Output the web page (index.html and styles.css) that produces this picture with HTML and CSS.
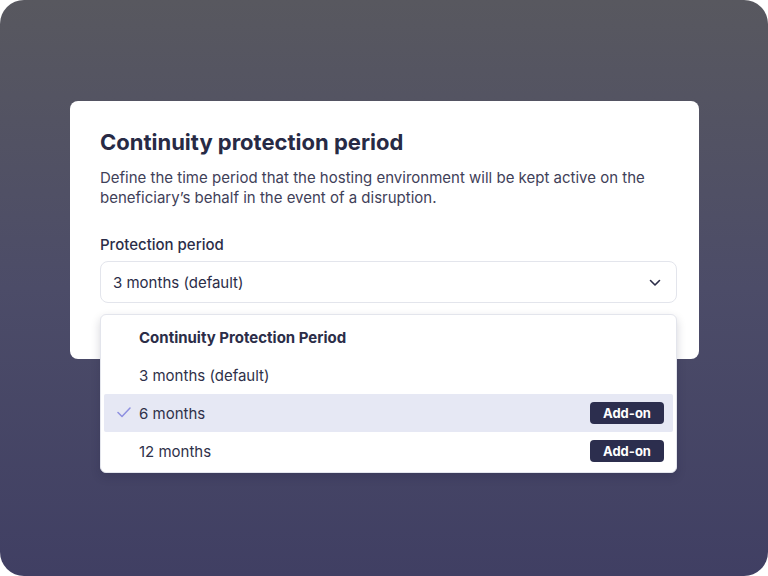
FILE: index.html
```html
<!DOCTYPE html>
<html lang="en">
  <head>
    <meta charset="UTF-8" />
    <meta name="viewport" content="width=device-width, initial-scale=1.0" />
    <title>Continuity protection period</title>
    <link rel="stylesheet" href="styles.css">
  </head>
  <body>
    <div class="frame">
      <div class="card">
        <h2 class="card-title">Continuity protection period</h2>
        <p class="card-desc">
          Define the time period that the hosting environment will be kept active on the
          beneficiary’s behalf in the event of a disruption.
        </p>
        <label class="field-label">Protection period</label>
        <div class="select-wrap">
          <div class="select">
            <span>3 months (default)</span>
            <svg class="chevron" width="12" height="8" viewBox="0 0 12 8">
              <path d="M1.5 1.5 L6 6 L10.5 1.5" fill="none" stroke="#2b2d48" stroke-width="1.6" stroke-linecap="round" stroke-linejoin="round" />
            </svg>
          </div>

          <!-- 열린 드롭다운 메뉴 -->
          <div class="menu">
            <div class="menu-row menu-head">Continuity Protection Period</div>
            <div class="menu-row">3 months (default)</div>
            <div class="menu-row selected">
              <svg class="check" width="14" height="11" viewBox="0 0 14 11">
                <path d="M1 5.5 L5 9.5 L13 1" fill="none" stroke="#8d8fe0" stroke-width="1.5" stroke-linecap="round" stroke-linejoin="round" />
              </svg>
              <span>6 months</span>
              <span class="badge">Add-on</span>
            </div>
            <div class="menu-row">
              <span>12 months</span>
              <span class="badge">Add-on</span>
            </div>
          </div>
        </div>
      </div>
    </div>
  </body>
</html>
```

FILE: styles.css
```css
* {
  box-sizing: border-box;
  margin: 0;
  padding: 0;
}
body {
  width: 768px;
  height: 576px;
  background-color: #fff;
  font-family: Inter, "Noto Sans", sans-serif;
  color: #2b2d48;
}
.frame {
  width: 768px;
  height: 576px;
  border-radius: 24px;
  background: linear-gradient(180deg, #58585f 0%, #4c4c68 50%, #403f63 100%);
  padding: 101px 0 0 70px;
}
.card {
  width: 629px;
  height: 258px;
  background-color: #fff;
  border-radius: 8px;
  padding: 27px 22px 0 30px;
  display: flex;
  flex-direction: column;
}
.card-title {
  font-size: 22px;
  line-height: 28px;
  font-weight: 700;
  color: #272a45;
}
.card-desc {
  margin-top: 12px;
  font-size: 15px;
  line-height: 20px;
  color: #3f4159;
}
.field-label {
  margin-top: 27px;
  font-size: 15px;
  line-height: 20px;
  font-weight: 500;
  color: #2b2d48;
}
.select-wrap {
  position: relative;
  margin-top: 6px;
}
.select {
  height: 42px;
  border: 1px solid #e3e5ec;
  border-radius: 8px;
  display: flex;
  align-items: center;
  justify-content: space-between;
  padding: 1px 15px 0 12px;
  font-size: 15px;
  color: #2b2d48;
}
.menu {
  position: absolute;
  top: 53px;
  left: 0;
  right: 0;
  height: 159px;
  background-color: #fff;
  border: 1px solid #e3e5ec;
  border-radius: 6px;
  box-shadow: 0 4px 10px rgb(20 20 50 / 18%);
  padding: 3px 3px 2px;
}
.menu-row {
  height: 38px;
  display: flex;
  align-items: center;
  padding: 0 9px 0 35px;
  font-size: 15px;
  color: #2f3149;
  border-radius: 2px;
  position: relative;
}
.menu-head {
  font-weight: 700;
  color: #2b2d48;
}
.menu-row.selected {
  background-color: #e6e8f4;
}
.check {
  position: absolute;
  left: 13px;
  top: 13px;
}
.badge {
  margin-left: auto;
  height: 22px;
  width: 74px;
  background-color: #2c2e4e;
  color: #fff;
  border-radius: 4px;
  font-size: 13px;
  font-weight: 700;
  display: flex;
  align-items: center;
  justify-content: center;
}
```
